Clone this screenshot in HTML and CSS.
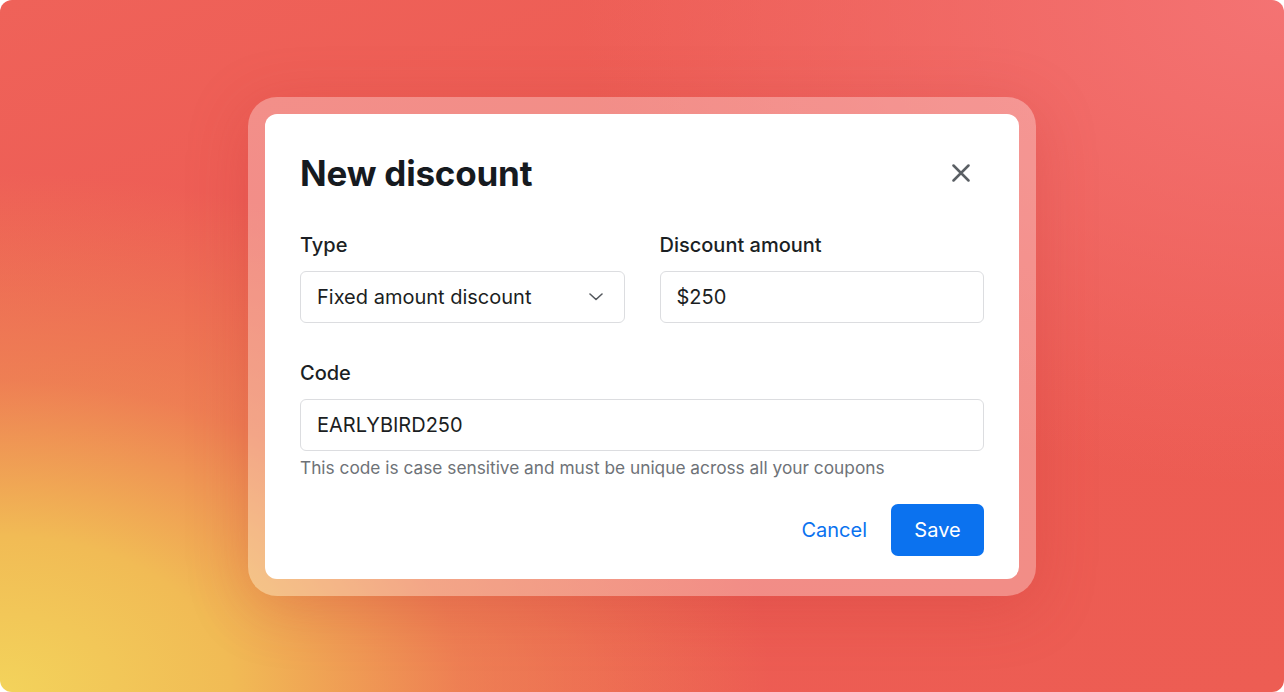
FILE: index.html
```html
<!DOCTYPE html>
<html lang="en">
<head>
<meta charset="utf-8">
<title>New discount</title>
<link rel="stylesheet" href="styles.css">
</head>
<body>
<div class="stage">
  <div class="frame">
    <div class="card">
      <div class="card-head">
        <h1 class="title">New discount</h1>
        <button class="close" aria-label="Close">
          <svg width="18" height="18" viewBox="0 0 18 18"><path d="M1.5 1.5 L16.5 16.5 M16.5 1.5 L1.5 16.5" stroke="#5a5f64" stroke-width="2.5" stroke-linecap="round" fill="none"/></svg>
        </button>
      </div>
      <div class="row-2">
        <div class="field">
          <label class="label">Type</label>
          <div class="input select">
            <span>Fixed amount discount</span>
            <svg width="14" height="8" viewBox="0 0 14 8"><path d="M1 1 L7 6.5 L13 1" stroke="#55595e" stroke-width="1.6" fill="none" stroke-linecap="round" stroke-linejoin="round"/></svg>
          </div>
        </div>
        <div class="field">
          <label class="label">Discount amount</label>
          <div class="input"><span>$250</span></div>
        </div>
      </div>
      <div class="field code-field">
        <label class="label">Code</label>
        <div class="input"><span>EARLYBIRD250</span></div>
        <p class="hint">This code is case sensitive and must be unique across all your coupons</p>
      </div>
      <div class="actions">
        <button class="btn-link">Cancel</button>
        <button class="btn-primary">Save</button>
      </div>
    </div>
  </div>
</div>
</body>
</html>
```

FILE: styles.css
```css
html, body {
  margin: 0;
  padding: 0;
  background: #ffffff;
}
body {
  font-family: Inter, "Noto Sans", "Liberation Sans", sans-serif;
}
.stage {
  width: 1284px;
  height: 692px;
  border-radius: 12px;
  overflow: hidden;
  display: flex;
  align-items: center;
  justify-content: center;
  background:
    radial-gradient(ellipse 60% 75% at 0% 100%, #f3d35b 0%, #f1bb55 30%, rgba(239,150,84,0.6) 60%, rgba(236,110,82,0) 100%),
    radial-gradient(ellipse 55% 70% at 100% 0%, #f47373 0%, rgba(243,112,110,0.6) 50%, rgba(240,100,95,0) 100%),
    linear-gradient(160deg, #ef6259 0%, #ec5a52 45%, #ed5d53 100%);
}
.frame {
  padding: 17px;
  border-radius: 29px;
  background: rgba(255, 255, 255, 0.3);
  box-shadow: 0 12px 60px rgba(190, 50, 50, 0.25);
}
.card {
  width: 684px;
  background: #ffffff;
  border-radius: 12px;
  padding: 35px 35px 23px;
  display: flex;
  flex-direction: column;
}
.card-head {
  display: flex;
  align-items: center;
  justify-content: space-between;
  margin-bottom: 36px;
}
.title {
  margin: 0;
  font-size: 35px;
  line-height: 48px;
  font-weight: 700;
  color: #161a1f;
  letter-spacing: -0.2px;
}
.close {
  width: 30px;
  height: 30px;
  margin-right: 8px;
  border: 0;
  background: none;
  padding: 0;
  display: flex;
  align-items: center;
  justify-content: center;
}
.row-2 {
  display: grid;
  grid-template-columns: 1fr 1fr;
  column-gap: 35px;
  margin-bottom: 38px;
}
.field {
  display: flex;
  flex-direction: column;
}
.label {
  font-size: 20px;
  line-height: 24px;
  font-weight: 500;
  color: #1b1f24;
  margin-bottom: 14px;
}
.input {
  height: 52px;
  box-sizing: border-box;
  border: 1.5px solid #dcdde0;
  border-radius: 6px;
  padding: 0 21px 0 16px;
  display: flex;
  align-items: center;
  justify-content: space-between;
  font-size: 20px;
  color: #1b1e22;
}
.hint {
  margin: 6px 0 0;
  font-size: 17.3px;
  line-height: 22px;
  color: #6e7277;
}
.actions {
  display: flex;
  justify-content: flex-end;
  align-items: center;
  gap: 24px;
  margin-top: 25px;
}
.btn-link {
  border: 0;
  background: none;
  padding: 0;
  font-family: inherit;
  font-size: 20px;
  color: #0a72ef;
}
.btn-primary {
  height: 52px;
  width: 93px;
  border: 0;
  border-radius: 7px;
  background: #0b72ef;
  color: #ffffff;
  font-family: inherit;
  font-size: 20px;
}
```
